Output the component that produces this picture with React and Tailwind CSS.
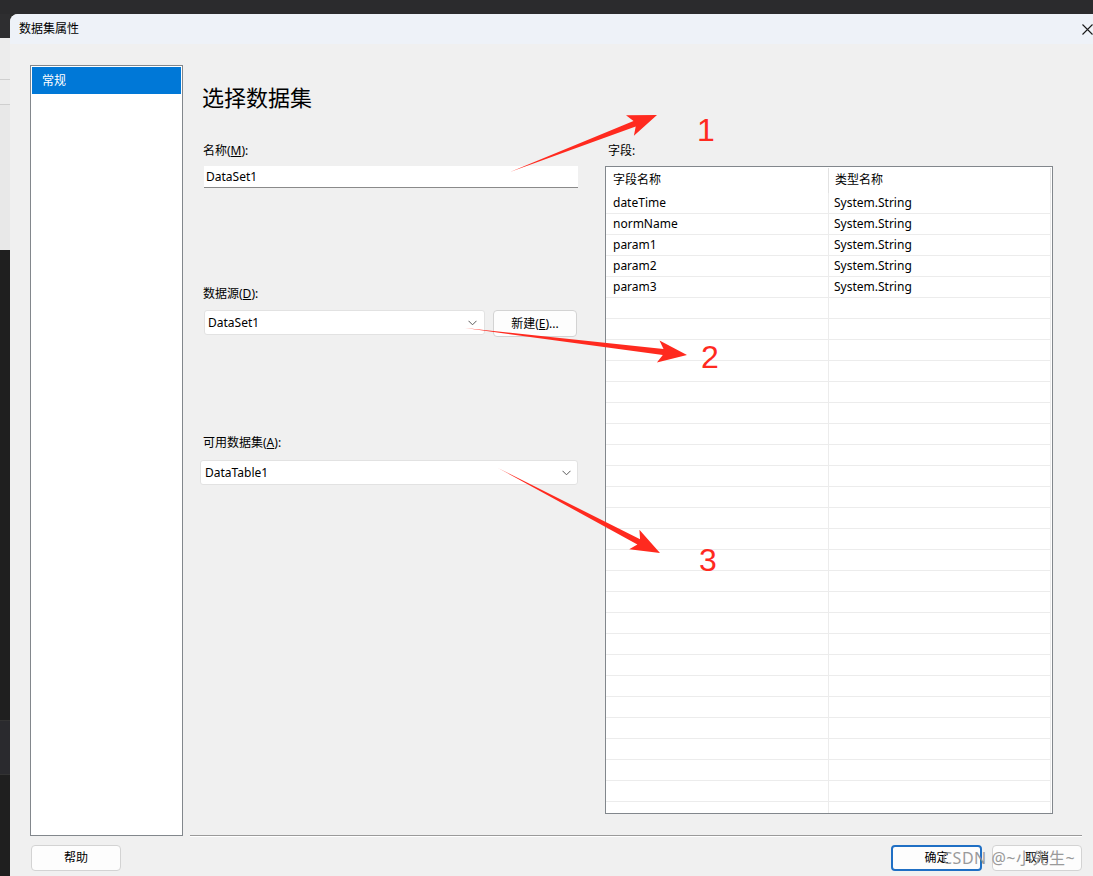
import React from "react";

const FONT = { fontFamily: '"Noto Sans", "Noto Sans CJK SC", sans-serif' };

function arrowPoints(x1, y1, x2, y2, headLen, headHalf, shaftHalf) {
  const dx = x2 - x1;
  const dy = y2 - y1;
  const len = Math.sqrt(dx * dx + dy * dy);
  const ux = dx / len;
  const uy = dy / len;
  const nx = -uy;
  const ny = ux;
  const bx = x2 - ux * headLen;
  const by = y2 - uy * headLen;
  const wx = bx - ux * 5;
  const wy = by - uy * 5;
  const pts = [
    [x1, y1],
    [bx + nx * shaftHalf, by + ny * shaftHalf],
    [wx + nx * headHalf, wy + ny * headHalf],
    [x2, y2],
    [wx - nx * headHalf, wy - ny * headHalf],
    [bx - nx * shaftHalf, by - ny * shaftHalf],
  ];
  return pts.map((p) => p[0].toFixed(1) + "," + p[1].toFixed(1)).join(" ");
}

function Chevron() {
  return (
    <svg width="9" height="6" viewBox="0 0 9 6" className="shrink-0">
      <polyline points="0.5,0.8 4.5,4.8 8.5,0.8" fill="none" stroke="#5a5a5a" strokeWidth="1" />
    </svg>
  );
}

export default function App() {
  const rows = Array.from({ length: 30 });
  const data = [
    ["dateTime", "System.String"],
    ["normName", "System.String"],
    ["param1", "System.String"],
    ["param2", "System.String"],
    ["param3", "System.String"],
  ];
  return (
    <div className="relative w-[1093px] h-[876px] overflow-hidden bg-[#2b2b2b] text-[12px] text-black" style={FONT}>
      <div className="h-[14px] bg-[#2b2b2d]" />
      <div className="flex h-[862px]">
        {/* left strip of window behind */}
        <div className="w-[10px] flex flex-col">
          <div className="h-[24px] bg-[#2e2e30]" />
          <div className="h-[42px] bg-[#ececec] border-b border-[#cfcfcf]" />
          <div className="h-[25px] bg-[#ececec] border-b border-[#cfcfcf]" />
          <div className="h-[145px] bg-[#e8e8e8]" />
          <div className="h-[470px] bg-[#1f1f1f]" />
          <div className="h-[55px] bg-[#2a2a2e] border-y border-[#333]" />
          <div className="flex-1 bg-[#1f1f1f]" />
        </div>
        {/* dialog */}
        <div className="flex-1 flex flex-col bg-[#f0f0f0] rounded-tl-[8px] overflow-hidden">
          <div className="h-[30px] bg-[#eef2f8] flex items-center justify-between pl-[9px]">
            <span className="text-[12px]">数据集属性</span>
            <svg width="11" height="11" viewBox="0 0 11 11">
              <path d="M0.5 0.5 L10.5 10.5 M10.5 0.5 L0.5 10.5" stroke="#1a1a1a" strokeWidth="1.1" />
            </svg>
          </div>
          <div className="flex pl-[20px] pt-[21px]">
            {/* nav list */}
            <div className="w-[153px] h-[771px] border border-[#82878c] bg-white p-[1px]">
              <div className="h-[27px] bg-[#0078d7] text-white pl-[10px] flex items-center">常规</div>
            </div>
            {/* right area */}
            <div className="ml-[7px] w-[892px] h-[771px] border-b border-[#9a9a9a] shadow-[0_1px_0_#ffffff] flex flex-col">
              <div className="pl-[12px] mt-[17px] text-[22px] leading-[30px]">选择数据集</div>
              <div className="flex mt-[31px]">
                {/* form */}
                <div className="ml-[10px] w-[379px] flex flex-col">
                  <div className="pl-[3px] h-[16px] leading-[16px]">
                    名称(<u>M</u>):
                  </div>
                  <div className="mt-[7px] ml-[4px] w-[374px] h-[22px] bg-white border-b border-[#8a8a8a] pl-[2px] flex items-center">
                    DataSet1
                  </div>
                  <div className="mt-[98px] pl-[3px] h-[16px] leading-[16px]">
                    数据源(<u>D</u>):
                  </div>
                  <div className="mt-[8px] ml-[4px] flex items-start">
                    <div className="w-[281px] h-[25px] bg-white border border-[#e2e2e2] rounded-[3px] pl-[3px] pr-[7px] flex items-center justify-between">
                      <span>DataSet1</span>
                      <Chevron />
                    </div>
                    <div className="ml-[8px] w-[84px] h-[27px] bg-[#fdfdfd] border border-[#d3d3d3] rounded-[4px] flex items-center justify-center">
                      新建(<u>E</u>)...
                    </div>
                  </div>
                  <div className="mt-[98px] pl-[3px] h-[16px] leading-[16px]">
                    可用数据集(<u>A</u>):
                  </div>
                  <div className="mt-[9px] w-[378px] h-[25px] bg-white border border-[#e2e2e2] rounded-[3px] pl-[4px] pr-[6px] flex items-center justify-between">
                    <span>DataTable1</span>
                    <Chevron />
                  </div>
                </div>
                {/* fields table */}
                <div className="ml-[26px] flex flex-col">
                  <div className="pl-[3px] h-[16px] leading-[16px]">字段:</div>
                  <div className="mt-[7px] w-[448px] h-[648px] border border-[#82878c] bg-white overflow-hidden">
                    <div className="h-[26px] flex">
                      <div className="w-[223px] pl-[7px] flex items-center relative">
                        字段名称
                        <div className="absolute right-0 top-[1px] bottom-0 w-px bg-[#e2e2e2]" />
                      </div>
                      <div className="w-[222px] pl-[6px] flex items-center relative">
                        类型名称
                        <div className="absolute right-0 top-[1px] bottom-0 w-px bg-[#e2e2e2]" />
                      </div>
                    </div>
                    {rows.map((_, i) => (
                      <div key={i} className="h-[21px] flex">
                        <div className="w-[223px] pl-[7px] flex items-center border-r border-b border-[#ececec]">
                          {data[i] ? data[i][0] : ""}
                        </div>
                        <div className="w-[222px] pl-[5px] flex items-center border-r border-b border-[#ececec]">
                          {data[i] ? data[i][1] : ""}
                        </div>
                      </div>
                    ))}
                  </div>
                </div>
              </div>
            </div>
          </div>
          {/* bottom buttons */}
          <div className="flex items-center justify-between mt-[9px] ml-[21px] w-[1051px]">
            <div className="w-[90px] h-[26px] bg-[#fdfdfd] border border-[#d3d3d3] rounded-[4px] flex items-center justify-center">
              帮助
            </div>
            <div className="flex gap-[10px]">
              <div className="w-[91px] h-[26px] bg-[#fdfdfd] border-2 border-[#1f6fc4] rounded-[4px] flex items-center justify-center">
                确定
              </div>
              <div className="w-[90px] h-[26px] bg-[#fdfdfd] border border-[#d3d3d3] rounded-[4px] flex items-center justify-center">
                取消
              </div>
            </div>
          </div>
        </div>
      </div>

      {/* watermark */}
      <div className="absolute left-[942px] top-[846px] text-[16px] leading-[24px] tracking-[0.5px] text-[#909090] opacity-90 whitespace-nowrap">
        CSDN @~小先生~
      </div>

      {/* annotation arrows */}
      <svg className="absolute inset-0 pointer-events-none" width="1093" height="876" viewBox="0 0 1093 876">
        <polygon points={arrowPoints(510, 172, 657, 115, 24, 11, 3)} fill="#ff2a1f" />
        <polygon points={arrowPoints(465, 328, 687, 355, 24, 11, 3)} fill="#ff2a1f" />
        <polygon points={arrowPoints(498, 468, 660, 553, 24, 11, 3)} fill="#ff2a1f" />
      </svg>
      <span className="absolute left-[697px] top-[111px] text-[32px] leading-[38px] text-[#ff2a1f]" style={{ fontFamily: '"Liberation Sans", sans-serif' }}>1</span>
      <span className="absolute left-[701px] top-[338px] text-[32px] leading-[38px] text-[#ff2a1f]" style={{ fontFamily: '"Liberation Sans", sans-serif' }}>2</span>
      <span className="absolute left-[699px] top-[541px] text-[32px] leading-[38px] text-[#ff2a1f]" style={{ fontFamily: '"Liberation Sans", sans-serif' }}>3</span>
    </div>
  );
}
